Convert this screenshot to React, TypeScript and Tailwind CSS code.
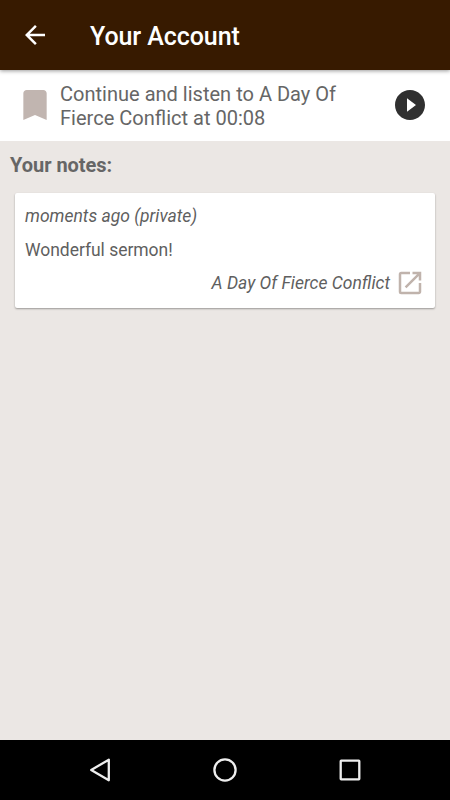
import { MdArrowBack, MdBookmark, MdOpenInNew, MdPlayCircleFilled } from 'react-icons/md';

interface Note {
  id: number;
  when: string;
  text: string;
  sermon: string;
}

const notes: Note[] = [
  {
    id: 1,
    when: 'moments ago (private)',
    text: 'Wonderful sermon!',
    sermon: 'A Day Of Fierce Conflict',
  },
];

function NoteCard({ when, text, sermon }: Note) {
  return (
    <article className="mx-[15px] h-[115px] rounded-[2px] bg-white px-[10px] pt-[12px] text-[17.5px] leading-[22px] text-[#5f5f5f] shadow-[0_1px_2px_rgba(0,0,0,0.35)]">
      <p className="italic">{when}</p>
      <p className="mt-[12px] tracking-[-0.03px]">{text}</p>
      <div className="mt-[7px] flex items-center justify-end">
        <span className="italic">{sermon}</span>
        <MdOpenInNew className="ml-[5px] size-[30px] text-[#c0b3ac]" />
      </div>
    </article>
  );
}

function App() {
  return (
    <div className="flex h-[800px] w-[450px] flex-col overflow-hidden bg-[#ebe7e4] font-[Roboto,sans-serif]">
      <header className="relative z-10 flex h-[70px] shrink-0 items-center bg-[#371a00] text-white shadow-[0_1px_4px_rgba(0,0,0,0.4)]">
        <MdArrowBack className="ml-5 size-[30px]" />
        <h1 className="ml-10 pt-[3px] text-[25px] font-medium tracking-[-0.07px]">Your Account</h1>
      </header>
      <section className="flex h-[71px] shrink-0 items-center bg-white">
        <MdBookmark className="mb-px ml-[15px] size-10 text-[#c1b5b0]" />
        <p className="ml-[5px] w-[300px] text-[20.05px] leading-[24px] text-[#666]">
          Continue and listen to A Day Of Fierce Conflict at 00:08
        </p>
        <MdPlayCircleFilled className="mb-px ml-8 size-9 text-[#303030]" />
      </section>
      <main className="flex-1">
        <h2 className="mb-[15px] ml-[10px] mt-[12px] text-[20px] font-bold leading-[25px] tracking-[-0.03px] text-[#666]">
          Your notes:
        </h2>
        {notes.map((note) => (
          <NoteCard key={note.id} {...note} />
        ))}
      </main>
      <nav className="flex h-[60px] shrink-0 items-center justify-center gap-[95px] bg-black">
        <svg className="size-[30px]" viewBox="0 0 30 30" fill="none" stroke="#eee" strokeWidth="2.3">
          <path d="M23.8 4.7V25.3L6.2 15Z" strokeLinejoin="round" />
        </svg>
        <svg className="size-[30px]" viewBox="0 0 30 30" fill="none" stroke="#eee" strokeWidth="2.3">
          <circle cx="15" cy="15" r="10.6" />
        </svg>
        <svg className="size-[30px]" viewBox="0 0 30 30" fill="none" stroke="#eee" strokeWidth="2.3">
          <rect x="5.7" y="5.7" width="18.6" height="18.6" rx="0.5" />
        </svg>
      </nav>
    </div>
  );
}

export default App;
